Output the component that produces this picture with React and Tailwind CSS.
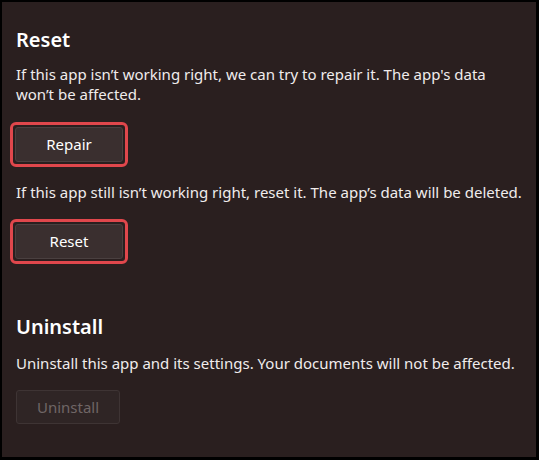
export default function App() {
  const font = { fontFamily: '"Segoe UI", "Noto Sans", "Liberation Sans", sans-serif' };
  return (
    <div className="w-[539px] h-[460px] bg-black pl-[2px] pt-[2px] pr-[3px] pb-[3px]" style={font}>
      <div className="w-full h-full bg-[#2a1f1f] pl-[14px] pt-[24px] text-[#f0ecec]">
        <h2 className="text-[20px] leading-[28px] font-semibold text-white">Reset</h2>
        <p className="mt-[10px] text-[15px] leading-[20px] pr-[30px]">
          If this app isn’t working right, we can try to repair it. The app's data won’t be affected.
        </p>
        <div className="mt-[18px] -ml-[6px] w-[118px] h-[45px] rounded-[6px] border-[3px] border-[#e0474c] p-[2px]">
          <div className="w-full h-full bg-[#3a2f2f] border border-[#4a4040] rounded-[3px] flex items-center justify-center text-[15px] text-white">
            Repair
          </div>
        </div>
        <p className="mt-[15px] text-[15px] leading-[20px]">
          If this app still isn’t working right, reset it. The app’s data will be deleted.
        </p>
        <div className="mt-[17px] -ml-[6px] w-[118px] h-[45px] rounded-[6px] border-[3px] border-[#e0474c] p-[2px]">
          <div className="w-full h-full bg-[#3a2f2f] border border-[#4a4040] rounded-[3px] flex items-center justify-center text-[15px] text-white">
            Reset
          </div>
        </div>
        <h2 className="mt-[49px] text-[20px] leading-[28px] font-semibold text-white">Uninstall</h2>
        <p className="mt-[12px] text-[15px] leading-[20px]">
          Uninstall this app and its settings. Your documents will not be affected.
        </p>
        <div className="mt-[17px] w-[104px] h-[34px] bg-[#2f2525] border border-[#3e3434] rounded-[3px] flex items-center justify-center text-[15px] text-[#6f6666]">
          Uninstall
        </div>
      </div>
    </div>
  );
}
